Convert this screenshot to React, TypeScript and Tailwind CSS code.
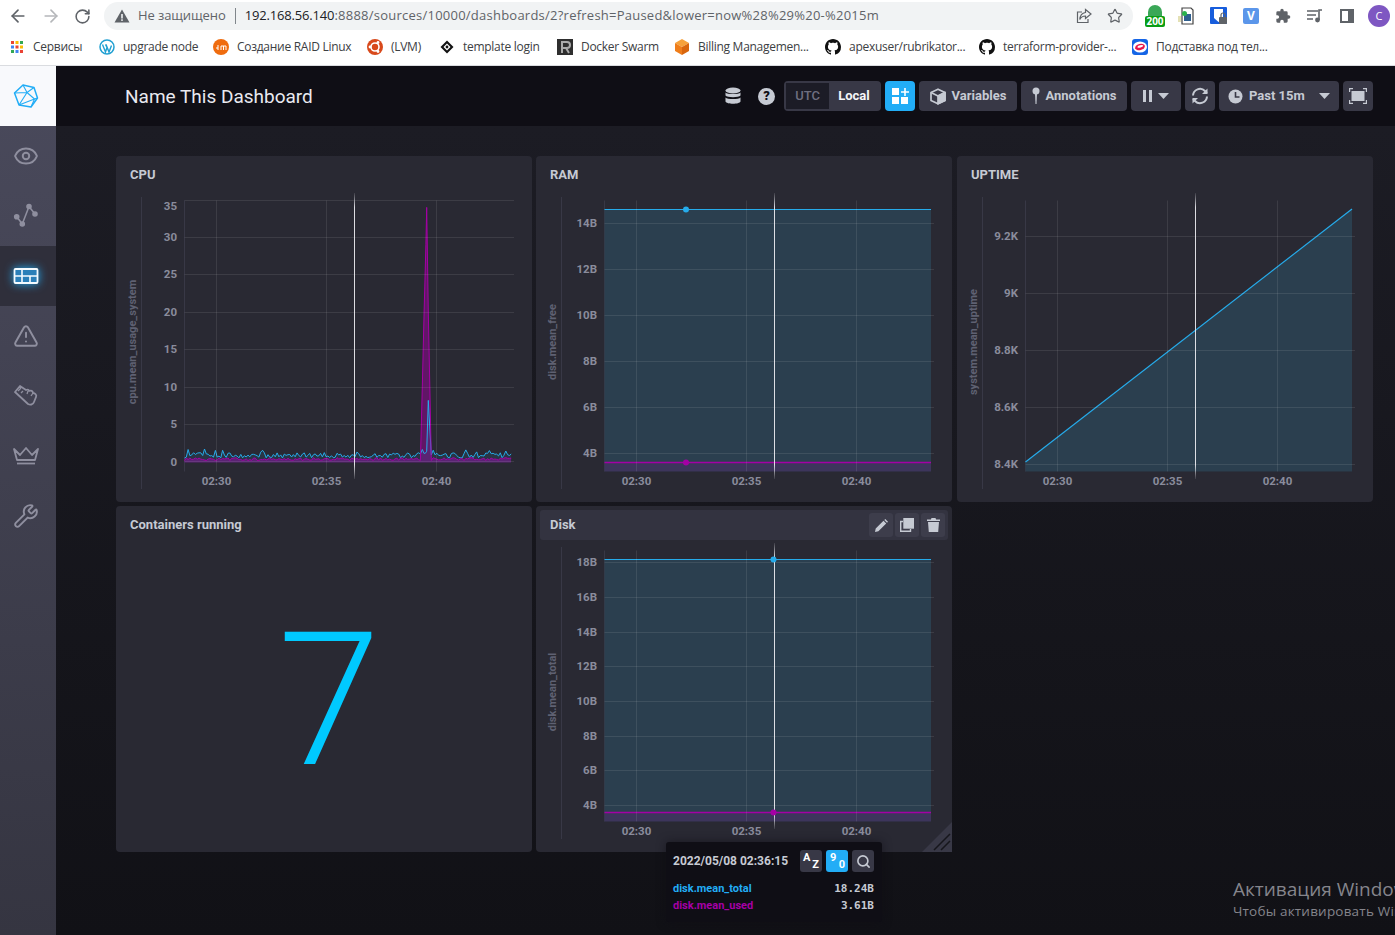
import { ArrowLeft, ArrowRight, Eye, RotateCw, Search, Star, TriangleAlert, Wrench } from 'lucide-react';
import type { ReactNode } from 'react';

const CYAN = '#26ABEA';
const MAGENTA = '#A500A5';

const bookmarks = [
  { label: 'Сервисы', width: 'w-[90px]', icon: 'apps' },
  { label: 'upgrade node', width: 'w-[114px]', icon: 'wp' },
  { label: 'Создание RAID Linux', width: 'w-[154px]', icon: 'dm' },
  { label: '(LVM)', width: 'w-[72px]', icon: 'ubuntu' },
  { label: 'template login', width: 'w-[118px]', icon: 'tpl' },
  { label: 'Docker Swarm', width: 'w-[117px]', icon: 'r' },
  { label: 'Billing Managemen...', width: 'w-[151px]', icon: 'box' },
  { label: 'apexuser/rubrikator...', width: 'w-[154px]', icon: 'gh' },
  { label: 'terraform-provider-...', width: 'w-[153px]', icon: 'gh' },
  { label: 'Подставка под тел...', width: 'w-[136px]', icon: 'pod' }
];

function BookmarkIcon({ kind }: { kind: string }) {
  if (kind === 'apps') {
    const colors = ['#ea4335', '#fbbc05', '#34a853', '#4285f4', '#ea4335', '#fbbc05', '#34a853', '#4285f4', '#ea4335'];
    return (
      <svg width="16" height="16" viewBox="0 0 16 16">
        {colors.map((c, i) => (
          <rect key={i} x={2 + (i % 3) * 4.5} y={2 + Math.floor(i / 3) * 4.5} width="3" height="3" fill={c} />
        ))}
      </svg>
    );
  }
  if (kind === 'wp') {
    return (
      <svg width="16" height="16" viewBox="0 0 16 16">
        <circle cx="8" cy="8" r="7" fill="none" stroke="#21a0d2" strokeWidth="1.5" />
        <path d="M3.5 5.5 6.5 13l1.5-4.5L6.5 5.5M7 5.5 10 13l2.5-6.5" fill="none" stroke="#21a0d2" strokeWidth="1.4" />
      </svg>
    );
  }
  if (kind === 'dm') {
    return (
      <svg width="16" height="16" viewBox="0 0 16 16">
        <circle cx="8" cy="8" r="8" fill="#ef6c0f" />
        <path d="M5 6v5M3 9h2M8 11V7h5v4M10.5 7v4" fill="none" stroke="#fff" strokeWidth="1" />
      </svg>
    );
  }
  if (kind === 'ubuntu') {
    return (
      <svg width="16" height="16" viewBox="0 0 16 16">
        <circle cx="8" cy="8" r="8" fill="#d8491b" />
        <circle cx="8" cy="8" r="4" fill="none" stroke="#fff" strokeWidth="1.6" />
        <circle cx="3" cy="8" r="1.4" fill="#fff" />
        <circle cx="11" cy="3.5" r="1.4" fill="#fff" />
        <circle cx="11" cy="12.5" r="1.4" fill="#fff" />
      </svg>
    );
  }
  if (kind === 'tpl') {
    return (
      <svg width="16" height="16" viewBox="0 0 16 16">
        <path d="M8 1.5 14.5 8 8 14.5 1.5 8Z" fill="#111" />
        <path d="M8 4.5 11.5 8 8 11.5 4.5 8Z" fill="#fff" />
        <circle cx="8" cy="8" r="1.4" fill="#111" />
      </svg>
    );
  }
  if (kind === 'r') {
    return (
      <svg width="16" height="16" viewBox="0 0 16 16">
        <rect width="16" height="16" fill="#2e2e2e" />
        <path d="M5 14V3h5a3 3 0 0 1 0 6H5m4 0 3 5" fill="none" stroke="#aaa" strokeWidth="2" />
      </svg>
    );
  }
  if (kind === 'box') {
    return (
      <svg width="16" height="16" viewBox="0 0 16 16">
        <path d="M8 0 15 4 8 8 1 4Z" fill="#f6a13a" />
        <path d="M1 4 8 8v8l-7-4Z" fill="#ef7d1a" />
        <path d="M15 4 8 8v8l7-4Z" fill="#d9660d" />
      </svg>
    );
  }
  if (kind === 'gh') {
    return (
      <svg width="16" height="16" viewBox="0 0 16 16" fill="#111">
        <path d="M8 0C3.58 0 0 3.58 0 8c0 3.54 2.29 6.53 5.47 7.59.4.07.55-.17.55-.38 0-.19-.01-.82-.01-1.49-2.01.37-2.53-.49-2.69-.94-.09-.23-.48-.94-.82-1.13-.28-.15-.68-.52-.01-.53.63-.01 1.08.58 1.23.82.72 1.21 1.87.87 2.33.66.07-.52.28-.87.51-1.07-1.78-.2-3.64-.89-3.64-3.95 0-.87.31-1.59.82-2.15-.08-.2-.36-1.02.08-2.12 0 0 .67-.21 2.2.82.64-.18 1.32-.27 2-.27s1.36.09 2 .27c1.53-1.04 2.2-.82 2.2-.82.44 1.1.16 1.92.08 2.12.51.56.82 1.27.82 2.15 0 3.07-1.87 3.75-3.65 3.95.29.25.54.73.54 1.48 0 1.07-.01 1.93-.01 2.2 0 .21.15.46.55.38A8.01 8.01 0 0 0 16 8c0-4.42-3.58-8-8-8Z" />
      </svg>
    );
  }
  return (
    <svg width="16" height="16" viewBox="0 0 16 16">
      <rect width="16" height="16" rx="3" fill="#1565e6" />
      <ellipse cx="8" cy="8" rx="7" ry="5.5" fill="#fff" />
      <ellipse cx="8" cy="8" rx="5" ry="3" fill="#e8174d" transform="rotate(-15 8 8)" />
      <ellipse cx="8.5" cy="7.5" rx="3" ry="1.2" fill="#fff" transform="rotate(-15 8 8)" />
    </svg>
  );
}

function ExtCell({ children }: { children: ReactNode }) {
  return <span className="flex h-[28px] w-[32px] items-center justify-center">{children}</span>;
}

function BrowserBar() {
  return (
    <div className="h-[66px] shrink-0 border-b border-[#dadce0] bg-white" style={{ fontFamily: '"Open Sans", sans-serif' }}>
      <div className="flex h-[32px] items-center">
        <div className="flex w-[104px] items-center gap-[13px] pl-[8px]">
          <ArrowLeft size={20} strokeWidth={2} className="text-[#5f6368]" />
          <ArrowRight size={20} strokeWidth={2} className="text-[#b5b7ba]" />
          <RotateCw size={17} strokeWidth={2.2} className="text-[#5f6368]" />
        </div>
        <div className="flex h-[28px] w-[1029px] items-center rounded-full bg-[#f1f3f4] pl-[10px] pr-[10px] text-[13px] text-[#5f6368]">
          <svg width="16" height="16" viewBox="0 0 16 16" className="shrink-0">
            <path d="M8 1.5 15.5 14.5H.5Z" fill="#5f6368" />
            <rect x="7.2" y="6" width="1.6" height="4.5" fill="#f1f3f4" />
            <rect x="7.2" y="11.3" width="1.6" height="1.6" fill="#f1f3f4" />
          </svg>
          <span className="ml-[8px] whitespace-nowrap tracking-[-0.1px]">Не защищено</span>
          <span className="mx-[9px] h-[16px] w-px bg-[#80868b]" />
          <span className="whitespace-nowrap tracking-[0.24px]">
            <span className="tracking-[-0.16px] text-[#202124]">192.168.56.140</span>:8888/sources/10000/dashboards/2?refresh=Paused&amp;lower=now%28%29%20-%2015m
          </span>
          <svg width="16" height="16" viewBox="0 0 16 16" fill="none" stroke="#5f6368" strokeWidth="1.2" className="ml-auto">
            <path d="M6 4H1.5v10.5H12V11" />
            <path d="M9.5 1.5 15 6l-5.5 4.5V8C7 8 5 9 3.8 11.5 4 8 6 5 9.5 4.5Z" />
          </svg>
          <Star size={16} strokeWidth={1.8} className="ml-[15px]" />
        </div>
        <div className="flex flex-1 items-center pl-[6px] text-[#5f6368]">
          <ExtCell>
            <span className="relative block h-[22px] w-[20px]">
              <span className="absolute left-[3px] top-0 h-[12px] w-[14px] rounded-t-full bg-[#3aa757]" />
              <span className="absolute bottom-0 left-0 h-[11px] w-[20px] rounded-[2px] bg-[#0a9d14] text-center text-[10px] font-bold leading-[11px] text-white">200</span>
            </span>
          </ExtCell>
          <ExtCell>
            <svg width="18" height="18" viewBox="0 0 18 18">
              <path d="M4 1h9l2 2v14H4Z" fill="#fff" stroke="#444" strokeWidth="1.2" />
              <rect x="6" y="7" width="7" height="7" fill="#2f5f8f" />
              <circle cx="6.5" cy="6.5" r="2.5" fill="#2bb24c" />
              <path d="M0 10h3M0 12h3M0 14h3" stroke="#c9c36a" />
            </svg>
          </ExtCell>
          <ExtCell>
            <svg width="20" height="20" viewBox="0 0 20 20">
              <rect x="1" y="1" width="17" height="17" rx="1" fill="#175ddc" />
              <path d="M5 3h9v10c-1 1-3 2-4.5 3L5 12Z" fill="#fff" />
              <rect x="10" y="11" width="8" height="7" rx="1" fill="#5f6368" />
              <path d="M12 11V9a2 2 0 0 1 4 0v2" fill="none" stroke="#5f6368" strokeWidth="1.2" />
            </svg>
          </ExtCell>
          <ExtCell>
            <span className="flex h-[16px] w-[16px] items-center justify-center rounded-[2px] bg-[#5b96ea] text-[12px] font-bold text-white">V</span>
          </ExtCell>
          <ExtCell>
            <svg width="16" height="16" viewBox="0 0 24 24" fill="#5f6368">
              <path d="M20.5 11H19V7a2 2 0 0 0-2-2h-4V3.5a2.5 2.5 0 0 0-5 0V5H4a2 2 0 0 0-2 2v3.8h1.5a2.7 2.7 0 0 1 0 5.4H2V20a2 2 0 0 0 2 2h3.8v-1.5a2.7 2.7 0 0 1 5.4 0V22H17a2 2 0 0 0 2-2v-4h1.5a2.5 2.5 0 0 0 0-5Z" />
            </svg>
          </ExtCell>
          <ExtCell>
            <svg width="18" height="18" viewBox="0 0 18 18" fill="none" stroke="#5f6368" strokeWidth="1.6">
              <path d="M1 4h11M1 8h9M1 12h6M16 3h-3v10" />
              <circle cx="11.5" cy="13" r="1.6" fill="#5f6368" />
            </svg>
          </ExtCell>
          <ExtCell>
            <span className="block h-[14px] w-[14px] border-2 border-r-[6px] border-[#5f6368]" />
          </ExtCell>
          <ExtCell>
            <span className="flex h-[22px] w-[22px] items-center justify-center rounded-full bg-[#7e57c2] text-[11px] text-white">C</span>
          </ExtCell>
        </div>
      </div>
      <div className="flex h-[30px] items-center pl-[9px] text-[12px] text-[#3c4043]">
        {bookmarks.map(b => (
          <div key={b.label + b.icon} className={`flex shrink-0 items-center gap-[8px] whitespace-nowrap ${b.width}`}>
            <span className="shrink-0"><BookmarkIcon kind={b.icon} /></span>
            <span className="tracking-[-0.28px]">{b.label}</span>
          </div>
        ))}
      </div>
    </div>
  );
}

function NavIcon({ children, active }: { children: ReactNode; active?: boolean }) {
  return (
    <div className={`flex h-[60px] items-center justify-center pr-[4px] ${active ? 'bg-[#2f2f3b]' : ''} text-[#8f8f9f]`}>{children}</div>
  );
}

function Sidebar() {
  return (
    <aside className="flex w-[56px] shrink-0 flex-col bg-gradient-to-b from-[#4a4a5c] to-[#353541]">
      <div className="flex h-[60px] items-center justify-center bg-[#f8f9fc] pr-[4px]">
        <svg width="26" height="26" viewBox="0 0 26 26" fill="none" stroke="#22ADF6" strokeWidth="1.5" strokeLinejoin="round">
          <path d="M10 2 21 4.5 24.5 15 18 24 6 22 1.5 10Z" />
          <path d="M10 2 14 9.5 21 4.5M14 9.5 1.5 10M14 9.5 21.5 16 24.5 15M21.5 16 18 24M21.5 16 6 22M14 9.5 6 22" strokeWidth="1.1" />
        </svg>
      </div>
      <NavIcon><Eye size={26} strokeWidth={1.8} /></NavIcon>
      <NavIcon>
        <svg width="26" height="26" viewBox="0 0 26 26" fill="none" stroke="currentColor" strokeWidth="1.6">
          <path d="M3.7 13.7 9.3 21 16 3.5 22 11" />
          <circle cx="3.7" cy="13.7" r="2" fill="currentColor" />
          <circle cx="9.3" cy="21" r="2" fill="currentColor" />
          <circle cx="16" cy="3.5" r="2" fill="currentColor" />
          <circle cx="22" cy="11" r="2" fill="currentColor" />
        </svg>
      </NavIcon>
      <NavIcon active>
        <svg width="30" height="30" viewBox="0 0 30 30" className="drop-shadow-[0_0_5px_#22adf6]">
          <rect x="3.5" y="8" width="23" height="14" rx="1" fill="#2a7fb8" stroke="#f4fbff" strokeWidth="1.8" />
          <path d="M3.5 15h23M11 8v14M19 15v7" stroke="#f4fbff" strokeWidth="1.6" fill="none" />
        </svg>
      </NavIcon>
      <NavIcon><TriangleAlert size={26} strokeWidth={1.8} /></NavIcon>
      <NavIcon>
        <svg width="26" height="26" viewBox="0 0 26 26" fill="none" stroke="currentColor" strokeWidth="1.8" strokeLinejoin="round">
          <path d="M2 9 7 3l6 4c2-1 3 0 3 1 2-1 4 0 4 2 2 0 4 2 3 4l-2 5c-1 3-4 3-6 2Z" />
          <path d="M5 8l3-3M8 10l2-2M15 8l-1 3M20 10l-2 3" strokeWidth="1.3" />
        </svg>
      </NavIcon>
      <NavIcon>
        <svg width="26" height="18" viewBox="0 0 26 18" fill="none" stroke="currentColor" strokeWidth="1.8" strokeLinejoin="round">
          <path d="M1 2 7 8 13 1l6 7 6-6-3 11H4Z" />
          <path d="M4 16.5h18" />
        </svg>
      </NavIcon>
      <NavIcon><Wrench size={26} strokeWidth={1.8} /></NavIcon>
    </aside>
  );
}

function HeaderBtn({ children, className = '' }: { children: ReactNode; className?: string }) {
  return (
    <div className={`flex h-[30px] items-center justify-center gap-[6px] rounded-[4px] bg-[#383846] text-[13px] font-bold text-[#c6cad3] ${className}`}>
      {children}
    </div>
  );
}

function DashHeader() {
  return (
    <header className="flex h-[60px] shrink-0 items-center bg-[#0f0e15] pl-[69px] pr-[22px]">
      <h1 className="mt-[2px] text-[19px] font-normal text-[#e9e9f0]">Name This Dashboard</h1>
      <div className="ml-auto flex items-center gap-[4px]">
        <svg width="16" height="18" viewBox="0 0 16 18" fill="#c6cad3" className="mr-[8px]">
          <ellipse cx="8" cy="3.5" rx="7.5" ry="3" />
          <path d="M.5 5.5C2 7.5 14 7.5 15.5 5.5v3C14 10.8 2 10.8.5 8.5Z" />
          <path d="M.5 10.5c1.5 2 13.5 2 15 0v4c-1 3-14 3-15 0Z" />
        </svg>
        <span className="mx-[5px] flex h-[17px] w-[17px] items-center justify-center rounded-full bg-[#c6cad3] text-[13px] font-black text-[#0f0e15]">?</span>
        <div className="flex h-[30px] w-[97px] rounded-[4px] border-2 border-[#383846] text-[13px] font-bold">
          <span className="flex w-[43px] items-center justify-center bg-[#1c1c26] font-medium text-[#6f6f80]">UTC</span>
          <span className="flex flex-1 items-center justify-center bg-[#383846] text-[#f6f6f8]">Local</span>
        </div>
        <div className="flex h-[30px] w-[30px] items-center justify-center rounded-[4px] bg-[#22adf6]">
          <svg width="22" height="22" viewBox="0 0 22 22" fill="#fff">
            <rect x="3" y="3" width="7" height="7" />
            <path d="M15.2 3h1.6v3.2H20v1.6h-3.2V11h-1.6V7.8H12V6.2h3.2Z" />
            <rect x="3" y="12" width="7" height="7" />
            <rect x="12" y="12" width="7" height="7" />
          </svg>
        </div>
        <HeaderBtn className="w-[98px]">
          <svg width="16" height="17" viewBox="0 0 16 17" fill="none" stroke="#c6cad3" strokeWidth="1.7" strokeLinejoin="round">
            <path d="M8 1.2 15 4.5v8L8 15.8 1 12.5v-8Z" />
            <path d="M1 4.5 8 8l7-3.5" />
            <path d="M8 8 15 4.5v8L8 15.8Z" fill="#c6cad3" />
          </svg>
          Variables
        </HeaderBtn>
        <HeaderBtn className="w-[106px]">
          <svg width="8" height="18" viewBox="0 0 8 18" fill="#c6cad3">
            <circle cx="4" cy="4" r="3.5" />
            <path d="M3 6h2l-.5 11h-1Z" />
          </svg>
          Annotations
        </HeaderBtn>
        <HeaderBtn className="w-[50px]">
          <svg width="9" height="12" viewBox="0 0 9 12" fill="#c6cad3">
            <rect width="3" height="12" />
            <rect x="6" width="3" height="12" />
          </svg>
          <svg width="11" height="6" viewBox="0 0 11 6" fill="#c6cad3"><path d="M0 0h11L5.5 6Z" /></svg>
        </HeaderBtn>
        <HeaderBtn className="w-[30px]">
          <svg width="18" height="18" viewBox="0 0 18 18" fill="none" stroke="#c6cad3" strokeWidth="2">
            <path d="M2 8.5A7 7 0 0 1 14 4l2 2" />
            <path d="M16.5 1.5V7h-5.5" fill="#c6cad3" stroke="none" />
            <path d="M16 9.5A7 7 0 0 1 4 14l-2-2" />
            <path d="M1.5 16.5V11H7" fill="#c6cad3" stroke="none" />
          </svg>
        </HeaderBtn>
        <HeaderBtn className="w-[120px] justify-start pl-[9px]">
          <svg width="15" height="15" viewBox="0 0 15 15">
            <circle cx="7.5" cy="7.5" r="7" fill="#c6cad3" />
            <path d="M7.5 3v5h4" fill="none" stroke="#383846" strokeWidth="1.6" />
          </svg>
          Past 15m
          <svg width="11" height="6" viewBox="0 0 11 6" fill="#c6cad3" className="ml-auto mr-[9px]"><path d="M0 0h11L5.5 6Z" /></svg>
        </HeaderBtn>
        <HeaderBtn className="w-[30px]">
          <svg width="18" height="16" viewBox="0 0 18 16" fill="none" stroke="#c6cad3" strokeWidth="1.2">
            <path d="M.6 4V.6H4M14 .6h3.4V4M17.4 12v3.4H14M4 15.4H.6V12" />
            <rect x="2.5" y="3" width="13" height="10" fill="#c6cad3" stroke="none" />
          </svg>
        </HeaderBtn>
      </div>
    </header>
  );
}

const mono = (seed: number) => {
  let s = seed;
  return () => {
    s = (s * 16807) % 2147483647;
    return s / 2147483647;
  };
};

// the spike around 02:39 is spelled out sample by sample
const magentaSpike: Record<number, number> = { 131: 10, 132: 20, 133: 29, 134: 34, 135: 20 };
const cyanSpike: Record<number, number> = { 132: 1.1, 133: 1.2, 134: 1.4, 135: 8.2, 136: 0.9 };

const cpuPaths = (() => {
  const r1 = mono(73);
  const r2 = mono(911);
  const y = (v: number) => 305.7 - v * 7.48;
  const cy: string[] = [];
  const mg: string[] = [];
  for (let i = 0; i <= 180; i++) {
    const x = i === 134 ? 310.7 : i === 135 ? 312.3 : 68.5 + i * 1.815;
    const c = cyanSpike[i] ?? 0.5 + r1() * 0.7 + (r1() > 0.92 ? 0.5 : 0);
    const m = magentaSpike[i] ?? 0.15 + r2() * 0.4;
    cy.push(`${x.toFixed(1)},${y(c).toFixed(1)}`);
    mg.push(`${x.toFixed(1)},${y(m).toFixed(1)}`);
  }
  return { cyan: cy.join(' '), magenta: mg.join(' ') };
})();

type ChartProps = {
  yLabel: string;
  ticks: { label: string; y: number; grid?: number }[];
  children?: ReactNode;
  overlay?: ReactNode;
};

// coordinates are panel-local: the viewBox starts below the 34px heading
function Chart({ yLabel, ticks, children, overlay }: ChartProps) {
  const left = 68.5;
  const right = 398;
  const top = 44.5;
  const bottom = 315.5;
  const xs = [{ x: 100.5, t: '02:30' }, { x: 210.5, t: '02:35' }, { x: 320.5, t: '02:40' }];
  const gradId = `hover-${yLabel.replace(/\W/g, '')}`;
  return (
    <svg width="416" height="312" viewBox="0 34 416 312" className="block" style={{ fontFamily: 'Roboto, sans-serif' }}>
      <defs>
        <linearGradient id={gradId} gradientUnits="userSpaceOnUse" x1="0" y1="37" x2="0" y2="323">
          <stop offset="0" stopColor="#f0f0f5" stopOpacity="0.1" />
          <stop offset="0.05" stopColor="#f0f0f5" stopOpacity="0.9" />
          <stop offset="0.95" stopColor="#f0f0f5" stopOpacity="0.9" />
          <stop offset="1" stopColor="#f0f0f5" stopOpacity="0.1" />
        </linearGradient>
      </defs>
      <line x1="25.5" x2="25.5" y1="41" y2="333" stroke="#383846" />
      <text x="15.5" y="186" transform="rotate(-90 15.5 186)" dy="4" textAnchor="middle" fontSize="11" fontWeight="700" fill="#5f6172">{yLabel}</text>
      <line x1={left} x2={left} y1={top} y2={bottom} stroke="#383846" />
      {children}
      {ticks.map(t => (
        <g key={t.label}>
          <line x1={left} x2={right} y1={t.grid ?? t.y} y2={t.grid ?? t.y} stroke="#ffffff" strokeOpacity="0.09" />
          <text x="61" y={t.y + 3} textAnchor="end" fontSize="11.5" fontWeight="700" fill="#8a8c9c">{t.label}</text>
        </g>
      ))}
      {xs.map(v => (
        <g key={v.t}>
          <line x1={v.x} x2={v.x} y1={top} y2={bottom} stroke="#ffffff" strokeOpacity="0.09" />
          <text x={v.x} y="329" textAnchor="middle" fontSize="11.5" fontWeight="700" fill="#8a8c9c">{v.t}</text>
        </g>
      ))}
      <rect x="238" y="37" width="1" height="286" fill={`url(#${gradId})`} />
      {overlay}
    </svg>
  );
}

function Panel({ title, hover, children }: { title: string; hover?: boolean; children: ReactNode }) {
  return (
    <section className="relative flex h-[346px] w-[416px] flex-col rounded-[4px] bg-[#292933]">
      <div className={`mx-[4px] mt-[4px] flex h-[30px] shrink-0 items-center rounded-[3px] pl-[10px] pr-[3px] ${hover ? 'bg-[#333340]' : ''}`}>
        <span className="text-[13px] font-bold text-[#c6cad3]">{title}</span>
        {hover && (
          <div className="ml-auto flex gap-[2px]">
            <span className="flex h-[24px] w-[24px] items-center justify-center rounded-[3px] bg-[#3d3d4b]">
              <svg width="13" height="13" viewBox="0 0 13 13" fill="#c6cad3"><path d="M0 13l.7-3.4L8.5 1.8l2.7 2.7-7.8 7.8ZM9.3 1l1-1 2.7 2.7-1 1Z" /></svg>
            </span>
            <span className="flex h-[24px] w-[24px] items-center justify-center rounded-[3px] bg-[#3d3d4b]">
              <svg width="14" height="14" viewBox="0 0 14 14" fill="none" stroke="#c6cad3" strokeWidth="1.4">
                <rect x="4" y=".7" width="9.3" height="9.3" fill="#c6cad3" />
                <path d="M3 3.5H.7v9.8h9.8V11" />
              </svg>
            </span>
            <span className="flex h-[24px] w-[24px] items-center justify-center rounded-[3px] bg-[#3d3d4b]">
              <svg width="13" height="14" viewBox="0 0 13 14" fill="#c6cad3">
                <path d="M4.5 0h4l.6 1.5H13v1.6H0V1.5h3.9ZM1 4h11l-.8 10H1.8Z" />
              </svg>
            </span>
          </div>
        )}
      </div>
      {children}
    </section>
  );
}

function CpuChart() {
  const ticks = [['35', 51, 44.5], ['30', 81.5, 81.5], ['25', 118.5, 118.5], ['20', 156.5, 156.5], ['15', 193.5, 193.5], ['10', 231.5, 231.5], ['5', 268.5, 268.5], ['0', 306.5, 305.5]] as const;
  return (
    <Chart yLabel="cpu.mean_usage_system" ticks={ticks.map(([label, y, grid]) => ({ label, y, grid }))}>
      <polygon points={`68.5,306.5 ${cpuPaths.magenta} 395,306.5`} fill={MAGENTA} fillOpacity="0.45" />
      <polygon points={`68.5,306.5 ${cpuPaths.cyan} 395,306.5`} fill={CYAN} fillOpacity="0.1" />
      <polyline points={cpuPaths.cyan} fill="none" stroke={CYAN} strokeWidth="1" />
      <polyline points={cpuPaths.magenta} fill="none" stroke={MAGENTA} strokeWidth="1" />
    </Chart>
  );
}

function LevelChart({ yLabel, ticks, high, low, dotX }: { yLabel: string; ticks: { label: string; y: number }[]; high: number; low: number; dotX: number }) {
  return (
    <Chart
      yLabel={yLabel}
      ticks={ticks}
      overlay={
        <>
          <circle cx={dotX} cy={high} r="3" fill={CYAN} />
          <circle cx={dotX} cy={low} r="3" fill={MAGENTA} />
        </>
      }
    >
      <rect x="68.5" y={high} width="326.5" height={315.5 - high} fill="#2b3f4f" />
      <rect x="68.5" y={low} width="326.5" height={315.5 - low} fill={MAGENTA} fillOpacity="0.15" />
      <line x1="68.5" x2="395" y1={high} y2={high} stroke={CYAN} />
      <line x1="68.5" x2="395" y1={low} y2={low} stroke={MAGENTA} strokeWidth="1.5" />
    </Chart>
  );
}

function UptimeChart() {
  const ticks = [['9.2K', 80.5], ['9K', 137.5], ['8.8K', 194.5], ['8.6K', 251.5], ['8.4K', 308.5]] as const;
  return (
    <Chart yLabel="system.mean_uptime" ticks={ticks.map(([label, y]) => ({ label, y }))}>
      <polygon points="68.5,306 395,53 395,315.5 68.5,315.5" fill="#2b3f4f" />
      <line x1="68.5" y1="306" x2="395" y2="53" stroke={CYAN} strokeWidth="1.2" />
    </Chart>
  );
}

function Tooltip() {
  return (
    <div className="absolute left-[666px] top-[842px] w-[216px] rounded-[3px] bg-[#0f0e15] pb-[8px] pl-[7px] pr-[8px] pt-[8px] shadow-[0_0_10px_rgba(15,14,21,0.6)]" style={{ fontFamily: 'Roboto, sans-serif' }}>
      <div className="flex items-center">
        <span className="text-[12px] font-bold text-[#c6cad3]">2022/05/08 02:36:15</span>
        <div className="ml-auto flex gap-[4px]">
          <span className="relative block h-[22px] w-[22px] rounded-[3px] bg-[#383846] text-[11px] font-bold leading-none text-white">
            <span className="absolute left-[3px] top-[2px]">A</span>
            <span className="absolute bottom-[2px] right-[3px]">Z</span>
          </span>
          <span className="relative block h-[22px] w-[22px] rounded-[3px] bg-[#22adf6] text-[11px] font-bold leading-none text-white">
            <span className="absolute left-[4px] top-[2px]">9</span>
            <span className="absolute bottom-[2px] right-[3px]">0</span>
          </span>
          <span className="flex h-[22px] w-[22px] items-center justify-center rounded-[3px] bg-[#383846] text-[#c6cad3]">
            <Search size={15} strokeWidth={2.6} />
          </span>
        </div>
      </div>
      <div className="mt-[8px] flex justify-between text-[11px] font-bold leading-[17px]">
        <span className="text-[#22adf6]">disk.mean_total</span>
        <span className="text-[#c6cad3]" style={{ fontFamily: '"DejaVu Sans Mono", monospace' }}>18.24B</span>
      </div>
      <div className="flex justify-between text-[11px] font-bold leading-[17px]">
        <span className="text-[#a500a5]">disk.mean_used</span>
        <span className="text-[#c6cad3]" style={{ fontFamily: '"DejaVu Sans Mono", monospace' }}>3.61B</span>
      </div>
    </div>
  );
}

export default function App() {
  return (
    <div className="relative flex h-[935px] w-[1395px] flex-col overflow-hidden" style={{ fontFamily: 'Roboto, sans-serif' }}>
      <BrowserBar />
      <div className="flex min-h-0 flex-1">
        <Sidebar />
        <div className="flex min-w-0 flex-1 flex-col">
          <DashHeader />
          <main className="flex-1 bg-gradient-to-b from-[#1c1c24] to-[#111116] pl-[60px] pt-[30px]">
            <div className="grid grid-cols-[416px_417px_416px] grid-rows-[346px_346px] gap-[4px]">
              <Panel title="CPU"><CpuChart /></Panel>
              <Panel title="RAM">
                <LevelChart
                  yLabel="disk.mean_free"
                  high={53.5}
                  low={306.5}
                  dotX={150}
                  ticks={[{ label: '14B', y: 67.5 }, { label: '12B', y: 113.5 }, { label: '10B', y: 159.5 }, { label: '8B', y: 205.5 }, { label: '6B', y: 251.5 }, { label: '4B', y: 297.5 }]}
                />
              </Panel>
              <Panel title="UPTIME"><UptimeChart /></Panel>
              <Panel title="Containers running">
                <div className="flex flex-1 items-center justify-center pl-[10px] pt-[8px] text-[185px] font-light leading-none text-[#00c9ff]">7</div>
              </Panel>
              <Panel title="Disk" hover>
                <LevelChart
                  yLabel="disk.mean_total"
                  high={53.5}
                  low={306.5}
                  dotX={237.5}
                  ticks={[{ label: '18B', y: 56.5 }, { label: '16B', y: 91.5 }, { label: '14B', y: 126.5 }, { label: '12B', y: 160.5 }, { label: '10B', y: 195.5 }, { label: '8B', y: 230.5 }, { label: '6B', y: 264.5 }, { label: '4B', y: 299.5 }]}
                />
                <div className="absolute bottom-0 right-0 h-[30px] w-[30px] bg-[#383846] [clip-path:polygon(100%_0,100%_100%,0_100%)]" />
                <svg width="30" height="30" viewBox="0 0 30 30" className="absolute bottom-0 right-0" stroke="#16161c" strokeWidth="1.5">
                  <path d="M12 28 28 12M19 28 28 19" />
                </svg>
              </Panel>
            </div>
          </main>
        </div>
      </div>
      <Tooltip />
      <div className="pointer-events-none absolute left-[1233px] top-[876px] whitespace-nowrap text-[#85858c]" style={{ fontFamily: '"Open Sans", sans-serif' }}>
        <div className="text-[19px] leading-[26px]">Активация Windows</div>
        <div className="text-[13.5px] leading-[19px] tracking-[0.2px]">Чтобы активировать Windows</div>
      </div>
    </div>
  );
}
